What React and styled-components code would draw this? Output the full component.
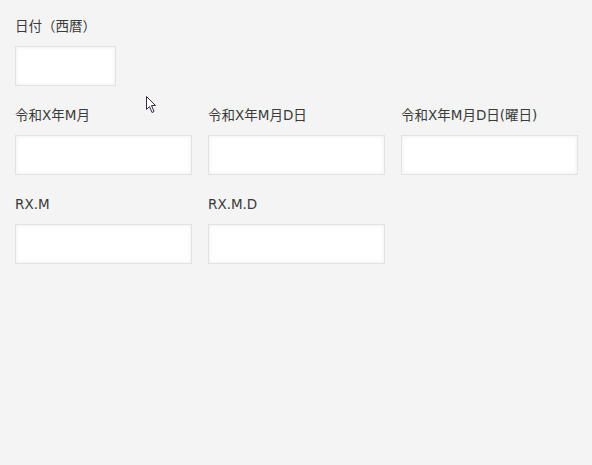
import React from 'react'
import styled, {createGlobalStyle} from 'styled-components'

const GlobalStyle = createGlobalStyle`
	html, body {
		margin: 0;
		padding: 0;
		background: #f4f4f4;
	}
	body {
		font-family: "DejaVu Sans", "Noto Sans CJK JP", sans-serif;
		color: #333;
	}
`;

const Page = styled.div`
	position: relative;
	min-height: 465px;
	box-sizing: border-box;
	padding: 16px 14px 0 15px;
	display: flex;
	flex-direction: column;
	gap: 19px;
`;

const Row = styled.div`
	display: flex;
	flex-direction: row;
	gap: 16px;
`;

const Field = styled.label`
	display: flex;
	flex-direction: column;
	gap: 10px;
	width: ${props => props.width}px;
`;

const LabelText = styled.span`
	font-size: 13.5px;
	line-height: 20px;
	height: 20px;
	white-space: nowrap;
	color: #3a3a3a;
`;

const TextInput = styled.input`
	box-sizing: border-box;
	width: 100%;
	height: 40px;
	margin: 0;
	padding: 0 8px;
	background: #fff;
	border: 1px solid #e2e2e2;
	box-shadow: inset 0 0 4px rgba(0, 0, 0, 0.08);
	font: inherit;
	font-size: 13px;
	outline: none;
`;

const Pointer = styled.svg`
	position: absolute;
	left: 146px;
	top: 96px;
	pointer-events: none;
`;

const rows = [
	[{label: '日付（西暦）', width: 101}],
	[
		{label: '令和X年M月', width: 177},
		{label: '令和X年M月D日', width: 177},
		{label: '令和X年M月D日(曜日)', width: 177},
	],
	[
		{label: 'RX.M', width: 177},
		{label: 'RX.M.D', width: 177},
	],
];

export default function App() {
	return (
		<Page>
			<GlobalStyle/>
			{rows.map((fields, i) => (
				<Row key={i}>
					{fields.map(f => (
						<Field key={f.label} width={f.width}>
							<LabelText>{f.label}</LabelText>
							<TextInput type="text"/>
						</Field>
					))}
				</Row>
			))}
			<Pointer width="13" height="18" viewBox="0 0 13 18">
				<path
					d="M0.5 0.5 L0.5 13.5 L3.5 10.5 L6 16.5 L8 15.5 L5.5 9.5 L9.5 9.5 Z"
					fill="#fff"
					stroke="#3a2a4a"
					strokeWidth="1"
					strokeLinejoin="round"
				/>
			</Pointer>
		</Page>
	)
}
